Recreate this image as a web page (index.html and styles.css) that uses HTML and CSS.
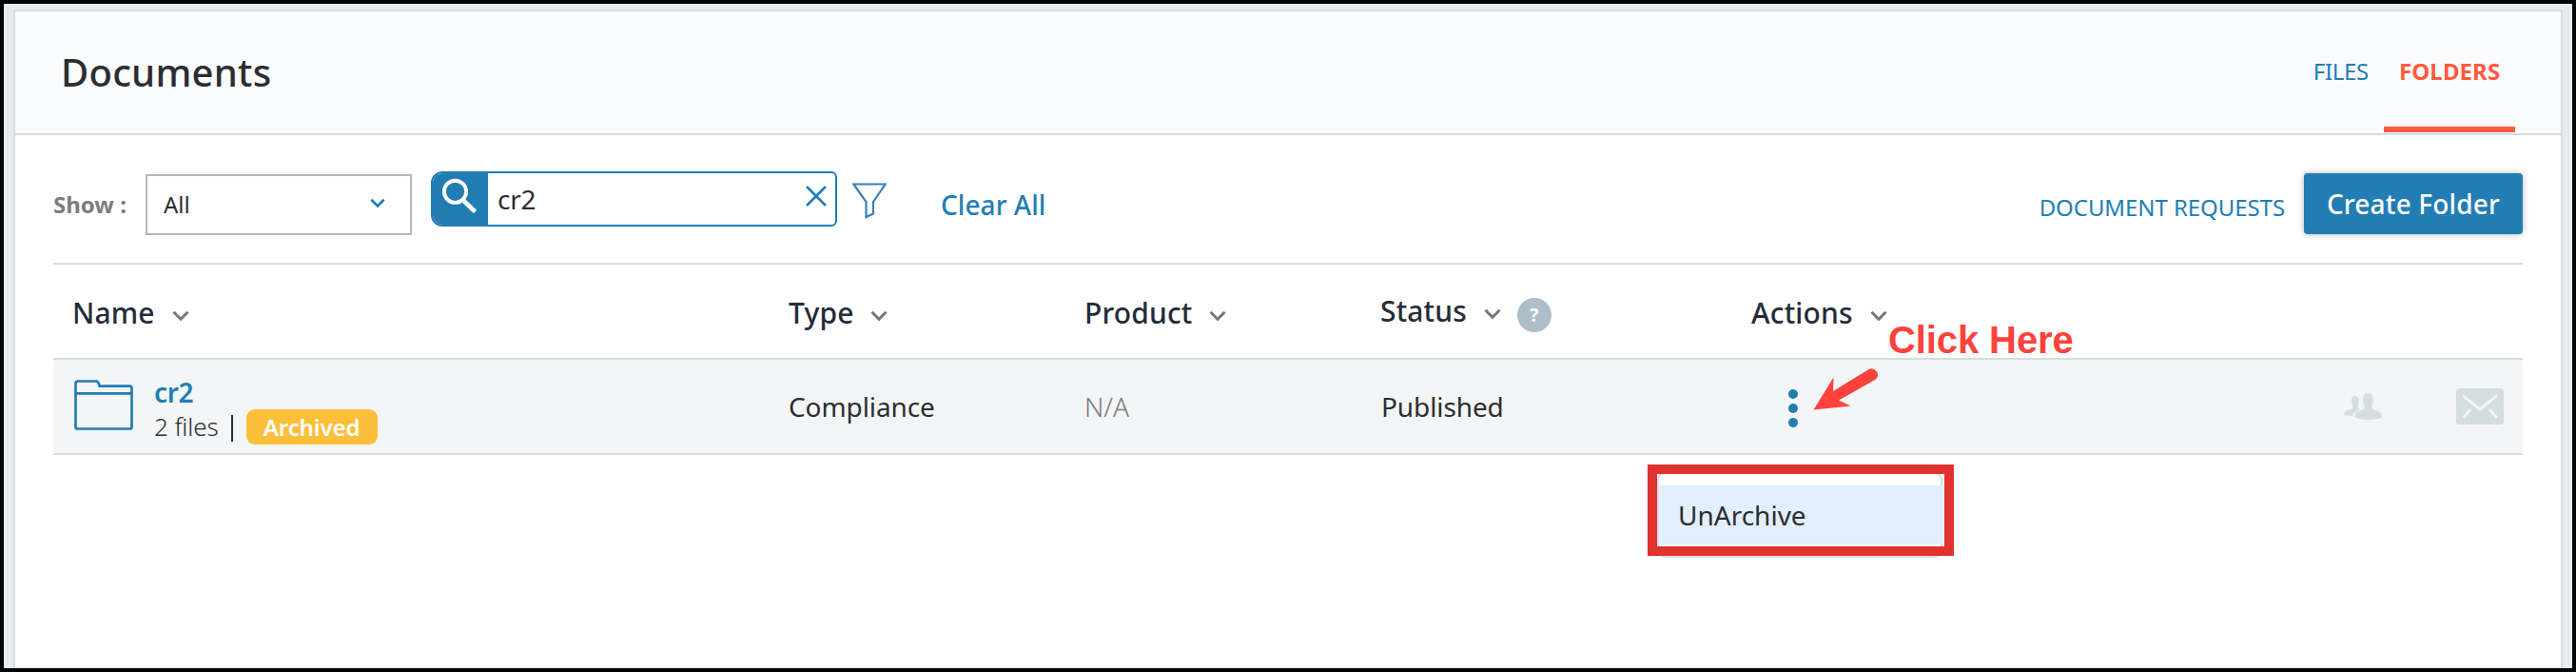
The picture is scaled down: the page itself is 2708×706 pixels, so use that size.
FILE: index.html
```html
<!DOCTYPE html>
<html lang="en">
<head>
<meta charset="utf-8">
<title>Documents</title>
<link rel="stylesheet" href="styles.css">
</head>
<body>
<svg class="defs" width="0" height="0">
  <symbol id="chevron" viewBox="0 0 18 12"><path d="M1.500 1.800 9 9.300l7.500-7.500" fill="none" stroke="currentColor" stroke-width="3"/></symbol>
</svg>
<div class="frame">
  <main class="panel">
    <header class="head">
      <h1 class="title">Documents</h1>
      <nav class="tabs">
        <a class="tab tab-files">FILES</a>
        <a class="tab tab-active">FOLDERS</a>
      </nav>
    </header>
    <section class="content">
      <div class="toolbar">
        <label class="show">Show :</label>
        <div class="select"><span>All</span><svg class="chev chev-select"><use href="#chevron"/></svg></div>
        <div class="search">
          <div class="search-btn"><svg width="60" height="58" viewBox="0 0 60 58"><circle cx="25.500" cy="21.300" r="11.600" fill="none" stroke="#fff" stroke-width="3.900"/><path d="M34.500 31 46.500 42.500" stroke="#fff" stroke-width="4.600"/></svg></div>
          <span class="search-text">cr2</span>
          <svg class="clear-x" width="22" height="22" viewBox="0 0 22 22"><path d="M1 1 21 21M21 1 1 21" stroke="#227db4" stroke-width="2.600"/></svg>
        </div>
        <svg class="funnel" width="36" height="38" viewBox="0 0 36 38"><path d="M1.300 1.500H34.700L22 20V32.500L14.500 36V20Z" fill="none" stroke="#3a7fb5" stroke-width="2.200"/></svg>
        <a class="clear">Clear All</a>
        <div class="right">
          <a class="requests">DOCUMENT REQUESTS</a>
          <button class="create">Create Folder</button>
        </div>
      </div>
      <div class="grid thead">
        <div class="th th-name"><span>Name</span><svg class="chev"><use href="#chevron"/></svg></div>
        <div class="th th-type"><span>Type</span><svg class="chev"><use href="#chevron"/></svg></div>
        <div class="th"><span>Product</span><svg class="chev"><use href="#chevron"/></svg></div>
        <div class="th th-status"><span>Status</span><svg class="chev"><use href="#chevron"/></svg><span class="help">?</span></div>
        <div class="th"><span>Actions</span><svg class="chev"><use href="#chevron"/></svg></div>
      </div>
      <div class="grid row">
        <div class="file">
          <svg class="folder" width="62" height="54" viewBox="0 0 62 54"><path d="M1.500 4Q1.500 1.500 4 1.500H23Q25 1.500 25.800 4L26.800 6.700H58.500Q60.500 6.700 60.500 8.700V49.500Q60.500 51.500 58.500 51.500H3.500Q1.500 51.500 1.500 49.500ZM1.500 14.300H60.500" fill="none" stroke="#227db4" stroke-width="2.700"/></svg>
          <div class="file-info">
            <a class="file-name">cr2</a>
            <div class="file-meta"><span class="count">2 files</span><i class="bar"></i><span class="badge">Archived</span></div>
          </div>
        </div>
        <div class="cell">Compliance</div>
        <div class="cell na">N/A</div>
        <div class="cell">Published</div>
        <div class="actions">
          <svg class="dots" width="10" height="40" viewBox="0 0 10 40" fill="#227db4"><circle cx="5" cy="5" r="5"/><circle cx="5" cy="20" r="5"/><circle cx="5" cy="35" r="5"/></svg>
          <div class="menu"><div class="menu-item">UnArchive</div></div>
          <div class="highlight"></div>
          <div class="callout">Click Here</div>
          <svg class="arrow" width="70" height="46" viewBox="0 0 70 46"><path d="M.5 44.500 21.500 10.500 21 25 58.500 2Q63-.2 66.500 4T66 12.500L27 34.500 39.500 40.500Z" fill="#ff423c"/></svg>
        </div>
        <div class="icons">
          <svg width="40" height="28" viewBox="0 0 40 28"><g fill="#d4dde0"><path d="M8 7C8 4.500 9.500 3 11.800 3S15.700 4.500 15.700 7C15.700 10 15 11 14.500 12.500V16L17.500 17.300C13 18.800 10 20.500 9 24.500L1 23Q0 22.700 0 21.500C.5 18.500 5 17.800 9.500 16V13C8.500 11 8 10 8 7Z"/><path d="M20.200 5.500C20.500 2 22.500 0 25.500 0S30.500 2 30.800 5.500C31 9 30.500 10 29.500 12.500V16.800C33 18.500 39 19 40 23V25.500C37 27 31 28 25.500 28S14 27 11.500 25.500V23C12 19 18 18.500 21.500 16.800V12.500C20.300 10.500 20 9 20.200 5.500Z"/></g></svg>
          <svg width="50" height="38" viewBox="0 0 50 38"><rect width="50" height="38" rx="3.500" fill="#d4dde0"/><path d="M7 7.500 25 22 43 7.500M7.500 31 15 22.300M43 31 35 22.300" fill="none" stroke="#f3f5f7" stroke-width="3"/></svg>
        </div>
      </div>
    </section>
  </main>
</div>
</body>
</html>
```

FILE: styles.css
```css
* { box-sizing: border-box; }
body { margin: 0; font-family: "Noto Sans", "Open Sans", sans-serif; color: #2c2d30; font-size: 28px; line-height: 40px; white-space: nowrap; }
svg { display: block; flex: none; }
.defs { position: absolute; }
.frame { height: 706px; border: 4px solid #000; background: #e6ecee; padding: 6px 10px 0; overflow: hidden; }
.panel { height: 692px; border: 2px solid #d4dde0; border-bottom: 0; background: #fff; }
.head { height: 130px; border-bottom: 2px solid #d4dde0; background: #fafbfd; display: flex; justify-content: space-between; padding: 0 48px; }
.title { margin: 0; font-size: 40px; font-weight: 500; line-height: 127px; letter-spacing: .25px; }
.tabs { display: flex; gap: 16px; font-size: 24px; line-height: 125px; color: #227db4; }
.tab-files { letter-spacing: -.3px; }
.tab-active { width: 138px; height: 127px; padding-left: 16px; font-weight: 700; letter-spacing: .1px; color: #ff5a3e; border-bottom: 6px solid #ff5a3e; }
.content { margin: 0 40px; }
.toolbar { height: 136px; border-bottom: 2px solid #d4dde0; display: flex; align-items: flex-start; }
.show { width: 97px; padding-top: 53px; font-size: 24px; font-weight: 700; color: #7c7c7c; }
.select { width: 280px; height: 64px; margin-top: 41px; border: 2px solid #b8b8b8; display: flex; align-items: center; justify-content: space-between; padding: 0 26px 0 17px; font-size: 24px; }
.chev { width: 18px; height: 12px; color: #777; }
.chev-select { width: 16px; height: 11px; color: #227db4; margin-top: -3px; }
.search { width: 427px; height: 58px; margin: 38px 0 0 20px; border: 2px solid #227db4; border-radius: 12px 6px 6px 12px; display: flex; align-items: center; overflow: hidden; }
.search-btn { width: 58px; height: 58px; background: #227db4; flex: none; }
.search-btn svg { margin: 0 0 0 -2px; }
.search-text { margin-left: 10px; flex: 1; letter-spacing: -.2px; }
.clear-x { margin: -6px 9px 0 0; }
.funnel { margin: 50px 0 0 16px; }
.clear { margin: 53px 0 0 57px; font-weight: 500; letter-spacing: .05px; color: #227db4; }
.right { margin-left: auto; display: flex; align-items: flex-start; color: #227db4; }
.requests { margin: 56px 20px 0 0; font-size: 24px; letter-spacing: -.07px; }
.create { width: 230px; height: 64px; margin-top: 40px; padding: 0; border: 0; border-radius: 4px; background: #227db4; color: #fff; font: 500 28px/62px "Noto Sans", sans-serif; letter-spacing: .17px; box-shadow: 0 0 6px rgba(0, 0, 0, .3); }
.grid { display: grid; grid-template-columns: 751px 312px 311px 390px 1fr auto; padding: 0 20px 0 22px; }
.thead { height: 98px; font-size: 30px; font-weight: 500; letter-spacing: .15px; color: #242c39; }
.th { display: flex; align-items: center; gap: 18px; padding-top: 3px; margin-left: -1px; }
.th-name { margin-left: -2px; }
.th-type { margin-left: 0; gap: 17px; }
.th .chev { margin-top: 6px; }
.th-status { padding: 0 0 1px; }
.help { width: 36px; height: 36px; margin: 9px 0 0 -1px; border-radius: 50%; background: #aebec8; color: #fff; font-size: 20px; font-weight: 700; line-height: 35px; text-align: center; }
.row { height: 102px; border: solid #d4dde0; border-width: 2px 0; background: #f3f5f7; align-items: center; }
.cell { letter-spacing: -.1px; }
.file { display: flex; align-items: flex-start; gap: 22px; margin-top: 5px; }
.folder { margin-top: 7px; }
.file-info { display: flex; flex-direction: column; }
.file-name { padding-top: 2px; font-weight: 600; line-height: 36px; letter-spacing: -.3px; color: #227db4; }
.file-meta { display: flex; align-items: center; height: 37px; }
.count { font-size: 26px; font-weight: 300; line-height: 38px; padding-bottom: 2px; letter-spacing: -.1px; }
.bar { width: 2px; height: 28px; margin: 3px 14px 0 13px; background: #2c2d30; }
.badge { width: 138px; height: 37px; border-radius: 9px; background: #fbbf3a; color: #fff; font-size: 24px; font-weight: 600; line-height: 37px; letter-spacing: -.1px; text-align: center; }
.na { font-weight: 300; color: #7c7c7c; margin-left: -1px; }
.actions { position: relative; align-self: stretch; margin-left: -1px; }
.dots { margin: 31px 0 0 39px; }
.menu { position: absolute; left: -99px; top: 118px; width: 300px; height: 90px; border: 2px solid #dcdde0; border-radius: 8px; background: #fff; padding-top: 12px; }
.menu-item { width: 300px; height: 62px; padding-left: 20px; background: #e1effe; line-height: 62px; }
.highlight { position: absolute; left: -109px; top: 110px; width: 322px; height: 96px; border: 10px solid #e0322f; }
.callout { position: absolute; left: 144px; top: -41px; font: 700 40px/40px "Liberation Sans", Arial, sans-serif; letter-spacing: -.1px; color: #ff423c; }
.arrow { position: absolute; left: 65px; top: 8px; }
.icons { display: flex; align-items: center; gap: 78px; }
```
